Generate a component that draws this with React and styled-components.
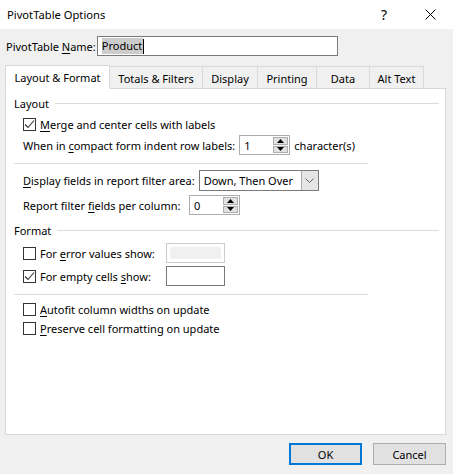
import React from "react";
import styled, { createGlobalStyle } from "styled-components";

const Global = createGlobalStyle`
  html, body { margin: 0; padding: 0; background: #f0f0f0; }
  body { font-family: "Noto Sans", "Segoe UI", sans-serif; font-size: 11px; color: #000; }
  * { box-sizing: border-box; }
`;

const Dialog = styled.div`
  width: 453px;
  height: 474px;
  display: flex;
  flex-direction: column;
  background: #f0f0f0;
`;

const TitleBar = styled.div`
  height: 29px;
  background: #fff;
  display: flex;
  align-items: center;
  padding-left: 7px;
`;

const Title = styled.div`
  flex: 1;
  font-size: 11.2px;
`;

const TitleButton = styled.div`
  width: 46px;
  height: 29px;
  display: flex;
  align-items: center;
  justify-content: center;
  font-size: 14px;
`;

const Body = styled.div`
  flex: 1;
  display: flex;
  flex-direction: column;
  padding: 7px 7px 0 5px;
`;

const NameRow = styled.div`
  display: flex;
  align-items: center;
  height: 20px;
  padding-left: 1px;
  gap: 1px;
`;

const TextBox = styled.div`
  width: ${p => p.w}px;
  height: 20px;
  border: 1px solid ${p => (p.disabled ? "#cccccc" : "#7a7a7a")};
  background: #fff;
  display: flex;
  align-items: center;
  padding: ${p => (p.disabled ? "3px" : "0 4px")};
`;

const DisabledFill = styled.div`
  flex: 1;
  align-self: stretch;
  background: #f0f0f0;
`;

const Selected = styled.span`
  background: #cccccc;
  line-height: 16px;
  padding: 0 1px 0 0;
`;

const Caret = styled.span`
  display: inline-block;
  width: 1px;
  height: 15px;
  background: #000;
`;

const Tabs = styled.div`
  display: flex;
  align-items: flex-end;
  margin-top: 8px;
  height: 24px;
  position: relative;
  z-index: 1;
`;

const Tab = styled.div`
  width: ${p => p.w}px;
  height: ${p => (p.active ? 24 : 22)}px;
  border: 1px solid #d9d9d9;
  border-bottom: ${p => (p.active ? "1px solid #fff" : "none")};
  margin-right: -1px;
  background: ${p => (p.active ? "#fff" : "#f0f0f0")};
  display: flex;
  align-items: center;
  justify-content: center;
  padding-top: ${p => (p.active ? 0 : 2)}px;
  margin-bottom: ${p => (p.active ? -1 : 0)}px;
  white-space: nowrap;
`;

const Panel = styled.div`
  height: 347px;
  background: #fff;
  border: 1px solid #d9d9d9;
  padding: 6px 6px 0 8px;
  display: flex;
  flex-direction: column;
`;

const GroupHeader = styled.div`
  height: 16px;
  display: flex;
  align-items: center;
  margin-top: ${p => p.mt || 0}px;
  &::after {
    content: "";
    flex: 1;
    height: 1px;
    background: #dcdcdc;
    margin-left: 6px;
  }
`;

const Row = styled.div`
  display: flex;
  align-items: center;
  height: ${p => p.h || 20}px;
  margin-top: ${p => p.mt || 0}px;
  padding-left: 9px;
  gap: 4px;
  white-space: nowrap;
`;

const Separator = styled.div`
  width: 354px;
  height: 1px;
  background: #dcdcdc;
  margin-top: ${p => p.mt || 0}px;
`;

const Box = styled.span`
  width: 13px;
  height: 13px;
  border: 1px solid #333;
  background: #fff;
  display: flex;
  align-items: center;
  justify-content: center;
  flex-shrink: 0;
`;

const U = styled.span`
  text-decoration: underline;
  text-underline-offset: 2px;
`;

const Label = styled.span`
  min-width: ${p => p.w || 0}px;
`;

const Spin = styled.div`
  width: 51px;
  height: 20px;
  border: 1px solid #adadad;
  background: #fff;
  display: flex;
  align-items: center;
  padding: 1px 1px 1px 4px;
`;

const SpinValue = styled.span`
  flex: 1;
`;

const SpinButtons = styled.div`
  width: 15px;
  align-self: stretch;
  display: flex;
  flex-direction: column;
  gap: 1px;
`;

const SpinHalf = styled.div`
  flex: 1;
  background: #e1e1e1;
  border: 1px solid #adadad;
  display: flex;
  align-items: center;
  justify-content: center;
`;

const Combo = styled.div`
  width: 120px;
  height: 21px;
  border: 1px solid #7a7a7a;
  background: #fff;
  display: flex;
  align-items: center;
  padding-left: 4px;
`;

const ComboText = styled.span`
  flex: 1;
`;

const ComboButton = styled.div`
  width: 17px;
  align-self: stretch;
  background: #e5e5e5;
  border-left: 1px solid #adadad;
  display: flex;
  align-items: center;
  justify-content: center;
`;

const Footer = styled.div`
  display: flex;
  justify-content: flex-end;
  gap: 11px;
  padding-top: 8px;
`;

const Button = styled.div`
  width: 73px;
  height: 22px;
  background: #e1e1e1;
  border: ${p => (p.primary ? "2px solid #0078d7" : "1px solid #adadad")};
  display: flex;
  align-items: center;
  justify-content: center;
`;

const Check = () => (
  <svg width="11" height="11" viewBox="0 0 11 11">
    <path d="M1 5.5 L4 8.5 L10 1.5" fill="none" stroke="#333" strokeWidth="1.1" />
  </svg>
);

const CheckBox = ({ checked }) => <Box>{checked && <Check />}</Box>;

const Arrow = ({ up }) => (
  <svg width="7" height="4" viewBox="0 0 7 4">
    <path d={up ? "M0 4 L3.5 0 L7 4 Z" : "M0 0 L3.5 4 L7 0 Z"} fill="#000" />
  </svg>
);

const SpinBox = ({ value }) => (
  <Spin>
    <SpinValue>{value}</SpinValue>
    <SpinButtons>
      <SpinHalf><Arrow up /></SpinHalf>
      <SpinHalf><Arrow /></SpinHalf>
    </SpinButtons>
  </Spin>
);

const CloseIcon = () => (
  <svg width="11" height="11" viewBox="0 0 11 11">
    <path d="M0.5 0.5 L10.5 10.5 M10.5 0.5 L0.5 10.5" stroke="#000" strokeWidth="1" />
  </svg>
);

const Chevron = () => (
  <svg width="9" height="5" viewBox="0 0 9 5">
    <path d="M0.5 0.5 L4.5 4.5 L8.5 0.5" fill="none" stroke="#606060" strokeWidth="1" />
  </svg>
);

const tabs = [
  { label: "Layout & Format", w: 105, active: true },
  { label: "Totals & Filters", w: 94 },
  { label: "Display", w: 56 },
  { label: "Printing", w: 60 },
  { label: "Data", w: 54 },
  { label: "Alt Text", w: 55 },
];

export default function App() {
  return (
    <Dialog>
      <Global />
      <TitleBar>
        <Title>PivotTable Options</Title>
        <TitleButton>?</TitleButton>
        <TitleButton><CloseIcon /></TitleButton>
      </TitleBar>
      <Body>
        <NameRow>
          <span>PivotTable <U>N</U>ame:</span>
          <TextBox w={241}>
            <Selected>Product</Selected>
            <Caret />
          </TextBox>
        </NameRow>
        <Tabs>
          {tabs.map(t => (
            <Tab key={t.label} active={t.active} w={t.w}>{t.label}</Tab>
          ))}
        </Tabs>
        <Panel>
          <GroupHeader>Layout</GroupHeader>
          <Row mt={3}>
            <CheckBox checked />
            <span><U>M</U>erge and center cells with labels</span>
          </Row>
          <Row mt={1}>
            <span>When in <U>c</U>ompact form indent row labels:</span>
            <SpinBox value="1" />
            <span>character(s)</span>
          </Row>
          <Separator mt={8} />
          <Row mt={6} h={21}>
            <span><U>D</U>isplay fields in report filter area:</span>
            <Combo>
              <ComboText>Down, Then Over</ComboText>
              <ComboButton><Chevron /></ComboButton>
            </Combo>
          </Row>
          <Row mt={4}>
            <Label w={162}>Report filter <U>f</U>ields per column:</Label>
            <SpinBox value="0" />
          </Row>
          <GroupHeader mt={7}>Format</GroupHeader>
          <Row mt={5}>
            <CheckBox />
            <Label w={122}>For <U>e</U>rror values show:</Label>
            <TextBox w={59} disabled><DisabledFill /></TextBox>
          </Row>
          <Row mt={3}>
            <CheckBox checked />
            <Label w={122}>For empty cells <U>s</U>how:</Label>
            <TextBox w={59} />
          </Row>
          <Separator mt={8} />
          <Row mt={5} h={19}>
            <CheckBox />
            <span><U>A</U>utofit column widths on update</span>
          </Row>
          <Row h={19}>
            <CheckBox />
            <span><U>P</U>reserve cell formatting on update</span>
          </Row>
        </Panel>
        <Footer>
          <Button primary>OK</Button>
          <Button>Cancel</Button>
        </Footer>
      </Body>
    </Dialog>
  );
}
